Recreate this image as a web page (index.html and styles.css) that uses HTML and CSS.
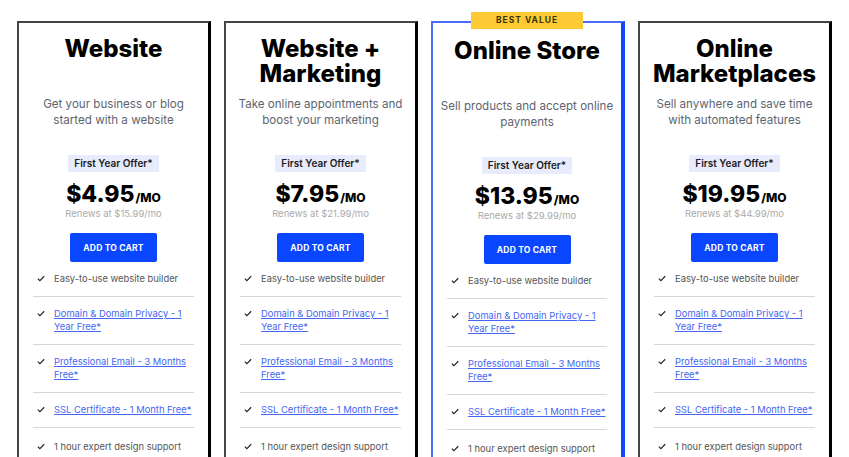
FILE: index.html
```html
<!DOCTYPE html>
<html lang="en">
<head>
    <meta charset="UTF-8">
    <meta name="viewport" content="width=device-width, initial-scale=1.0">
    <title>Plans</title>
    <link rel="stylesheet" href="styles.css">
</head>
<body>
    <div class="plans">

        <!-- Plan 1 -->
        <div class="plan">
            <h2 class="plan-title">Website</h2>
            <p class="plan-desc">Get your business or blog started with a website</p>
            <span class="offer">First Year Offer*</span>
            <div class="price">$4.95<span class="per">/MO</span></div>
            <div class="renew">Renews at $15.99/mo</div>
            <button class="cart-btn">ADD TO CART</button>
            <ul class="features">
                <li><svg class="check" viewBox="0 0 10 8"><path d="M1 4.2 3.6 6.8 9 1.2"/></svg><span>Easy-to-use website builder</span></li>
                <li><svg class="check" viewBox="0 0 10 8"><path d="M1 4.2 3.6 6.8 9 1.2"/></svg><a href="#">Domain &amp; Domain Privacy - 1 Year Free*</a></li>
                <li><svg class="check" viewBox="0 0 10 8"><path d="M1 4.2 3.6 6.8 9 1.2"/></svg><a href="#">Professional Email - 3 Months Free*</a></li>
                <li><svg class="check" viewBox="0 0 10 8"><path d="M1 4.2 3.6 6.8 9 1.2"/></svg><a href="#">SSL Certificate - 1 Month Free*</a></li>
                <li><svg class="check" viewBox="0 0 10 8"><path d="M1 4.2 3.6 6.8 9 1.2"/></svg><span>1 hour expert design support</span></li>
            </ul>
        </div>

        <!-- Plan 2 -->
        <div class="plan">
            <h2 class="plan-title">Website + Marketing</h2>
            <p class="plan-desc">Take online appointments and boost your marketing</p>
            <span class="offer">First Year Offer*</span>
            <div class="price">$7.95<span class="per">/MO</span></div>
            <div class="renew">Renews at $21.99/mo</div>
            <button class="cart-btn">ADD TO CART</button>
            <ul class="features">
                <li><svg class="check" viewBox="0 0 10 8"><path d="M1 4.2 3.6 6.8 9 1.2"/></svg><span>Easy-to-use website builder</span></li>
                <li><svg class="check" viewBox="0 0 10 8"><path d="M1 4.2 3.6 6.8 9 1.2"/></svg><a href="#">Domain &amp; Domain Privacy - 1 Year Free*</a></li>
                <li><svg class="check" viewBox="0 0 10 8"><path d="M1 4.2 3.6 6.8 9 1.2"/></svg><a href="#">Professional Email - 3 Months Free*</a></li>
                <li><svg class="check" viewBox="0 0 10 8"><path d="M1 4.2 3.6 6.8 9 1.2"/></svg><a href="#">SSL Certificate - 1 Month Free*</a></li>
                <li><svg class="check" viewBox="0 0 10 8"><path d="M1 4.2 3.6 6.8 9 1.2"/></svg><span>1 hour expert design support</span></li>
            </ul>
        </div>

        <!-- Plan 3 (destacado) -->
        <div class="plan plan-featured">
            <span class="best-value">BEST VALUE</span>
            <h2 class="plan-title">Online Store</h2>
            <p class="plan-desc">Sell products and accept online payments</p>
            <span class="offer">First Year Offer*</span>
            <div class="price">$13.95<span class="per">/MO</span></div>
            <div class="renew">Renews at $29.99/mo</div>
            <button class="cart-btn">ADD TO CART</button>
            <ul class="features">
                <li><svg class="check" viewBox="0 0 10 8"><path d="M1 4.2 3.6 6.8 9 1.2"/></svg><span>Easy-to-use website builder</span></li>
                <li><svg class="check" viewBox="0 0 10 8"><path d="M1 4.2 3.6 6.8 9 1.2"/></svg><a href="#">Domain &amp; Domain Privacy - 1 Year Free*</a></li>
                <li><svg class="check" viewBox="0 0 10 8"><path d="M1 4.2 3.6 6.8 9 1.2"/></svg><a href="#">Professional Email - 3 Months Free*</a></li>
                <li><svg class="check" viewBox="0 0 10 8"><path d="M1 4.2 3.6 6.8 9 1.2"/></svg><a href="#">SSL Certificate - 1 Month Free*</a></li>
                <li><svg class="check" viewBox="0 0 10 8"><path d="M1 4.2 3.6 6.8 9 1.2"/></svg><span>1 hour expert design support</span></li>
            </ul>
        </div>

        <!-- Plan 4 -->
        <div class="plan">
            <h2 class="plan-title">Online Marketplaces</h2>
            <p class="plan-desc">Sell anywhere and save time with automated features</p>
            <span class="offer">First Year Offer*</span>
            <div class="price">$19.95<span class="per">/MO</span></div>
            <div class="renew">Renews at $44.99/mo</div>
            <button class="cart-btn">ADD TO CART</button>
            <ul class="features">
                <li><svg class="check" viewBox="0 0 10 8"><path d="M1 4.2 3.6 6.8 9 1.2"/></svg><span>Easy-to-use website builder</span></li>
                <li><svg class="check" viewBox="0 0 10 8"><path d="M1 4.2 3.6 6.8 9 1.2"/></svg><a href="#">Domain &amp; Domain Privacy - 1 Year Free*</a></li>
                <li><svg class="check" viewBox="0 0 10 8"><path d="M1 4.2 3.6 6.8 9 1.2"/></svg><a href="#">Professional Email - 3 Months Free*</a></li>
                <li><svg class="check" viewBox="0 0 10 8"><path d="M1 4.2 3.6 6.8 9 1.2"/></svg><a href="#">SSL Certificate - 1 Month Free*</a></li>
                <li><svg class="check" viewBox="0 0 10 8"><path d="M1 4.2 3.6 6.8 9 1.2"/></svg><span>1 hour expert design support</span></li>
            </ul>
        </div>

    </div>
</body>
</html>
```

FILE: styles.css
```css
/* Base */
body {
    margin: 0;
    background-color: #fff;
    font-family: 'Inter', 'Open Sans', sans-serif;
    color: #222;
    overflow: hidden;
}

/* Rejilla de planes */
.plans {
    display: grid;
    grid-template-columns: repeat(4, 194px);
    gap: 13px;
    padding: 21px 17px 0;
}

/* Tarjeta */
.plan {
    position: relative;
    display: flex;
    flex-direction: column;
    align-items: center;
    height: 460px;
    padding-top: 13px;
    border: 2px solid #444;
    border-right: 3px solid #000;
    text-align: center;
}

.plan-featured {
    padding-top: 15px;
    border-color: #4a6cf7;
    border-right: 4px solid #1346ff;
}

.best-value {
    position: absolute;
    top: -11px;
    left: 50%;
    transform: translateX(-50%);
    width: 112px;
    height: 17px;
    line-height: 17px;
    background-color: #fdca36;
    color: #3b3205;
    font-size: 8.5px;
    font-weight: 700;
    letter-spacing: 1px;
}

.plan-title {
    margin: 0;
    height: 50px;
    padding: 0 8px;
    font-size: 24px;
    line-height: 25px;
    font-weight: 800;
    color: #000;
}

.plan-desc {
    margin: 10px 0 0;
    padding: 0 5px;
    font-size: 11.6px;
    line-height: 16px;
    color: #5d6470;
}

/* Precio */
.offer {
    margin-top: 27px;
    padding: 0 6px;
    height: 17px;
    line-height: 17px;
    background-color: #e7ebfb;
    font-size: 10px;
    font-weight: 600;
    color: #1d1d1d;
}

.price {
    margin-top: 8px;
    font-size: 23px;
    line-height: 28px;
    font-weight: 800;
    color: #000;
}

.per {
    font-size: 12px;
    line-height: 0;
    font-weight: 800;
    margin-left: 1px;
}

.renew {
    font-size: 9.5px;
    line-height: 12px;
    color: #aaa;
}

.cart-btn {
    margin-top: 13px;
    width: 87px;
    height: 29px;
    border: none;
    border-radius: 2px;
    background-color: #0a46ff;
    color: #fff;
    font-family: inherit;
    font-size: 8.5px;
    font-weight: 700;
    letter-spacing: 0.2px;
    cursor: pointer;
}

/* Lista de caracteristicas */
.features {
    align-self: stretch;
    list-style: none;
    margin: 1px 14px 0;
    padding: 0;
    text-align: left;
}

.features li {
    display: flex;
    align-items: flex-start;
    gap: 9px;
    padding: 10px 0 11px 4px;
    border-bottom: 1px solid #d6d6d6;
    font-size: 9.4px;
    line-height: 13px;
    color: #555;
}

.features li:first-child {
    padding-top: 9px;
}

.features li:last-child {
    padding-top: 12px;
    border-bottom: none;
}

.check {
    flex: none;
    width: 8px;
    height: 7px;
    margin-top: 3px;
    fill: none;
    stroke: #222;
    stroke-width: 1.4;
}

.features a {
    color: #4466f2;
    text-decoration: underline;
}
```
